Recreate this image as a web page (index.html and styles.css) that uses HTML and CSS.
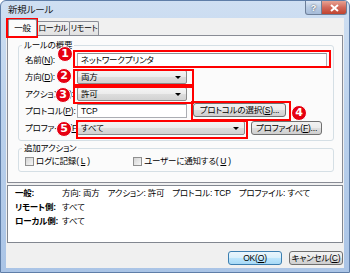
FILE: index.html
```html
<!DOCTYPE html>
<html lang="ja">
<head>
    <meta charset="UTF-8">
    <title>新規ルール</title>
    <link rel="stylesheet" href="styles.css">
</head>
<body>
    <div class="window">
        <div class="titlebar">
            <span class="title">新規ルール</span>
            <div class="caption-buttons">
                <span class="cap-btn help">?</span>
                <span class="cap-btn close">
                    <svg width="9" height="8" viewBox="0 0 9 8"><path d="M1 1 L8 7 M8 1 L1 7" stroke="#fff" stroke-width="2"/></svg>
                </span>
            </div>
        </div>

        <div class="frame">
            <div class="client">
                <div class="tabs">
                    <div class="tab active">一般</div>
                    <div class="tab">ローカル</div>
                    <div class="tab">リモート</div>
                </div>

                <div class="panel">
                    <div class="group rule-group">
                        <div class="group-title">ルールの概要</div>
                        <div class="form">
                            <label>名前(<u>N</u>):</label>
                            <div class="cell"><div class="input name-input">ネットワークプリンタ</div></div>

                            <label>方向(<u>D</u>):</label>
                            <div class="cell"><div class="combo short">両方</div></div>

                            <label>アクション(<u>A</u>):</label>
                            <div class="cell"><div class="combo short">許可</div></div>

                            <label>プロトコル(<u>P</u>):</label>
                            <div class="cell">
                                <div class="input short">TCP</div>
                                <div class="btn protocol-btn">プロトコルの選択(<u>S</u>)...</div>
                            </div>

                            <label>プロファイル(<u>F</u>):</label>
                            <div class="cell">
                                <div class="combo profile-combo">すべて</div>
                                <div class="btn profile-btn">プロファイル(<u>F</u>)...</div>
                            </div>
                        </div>
                    </div>

                    <div class="group action-group">
                        <div class="group-title">追加アクション</div>
                        <div class="checks">
                            <span class="check log"><span class="box"></span>ログに記録(<u>L</u>)</span>
                            <span class="check"><span class="box"></span>ユーザーに通知する(<u>U</u>)</span>
                        </div>
                    </div>
                </div>

                <div class="summary">
                    <div class="line"><b>一般:</b><span>方向: 両方<i></i>アクション: 許可<i></i>プロトコル: TCP<i></i>プロファイル: すべて</span></div>
                    <div class="line"><b>リモート側:</b><span>すべて</span></div>
                    <div class="line"><b>ローカル側:</b><span>すべて</span></div>
                </div>

                <div class="buttons">
                    <div class="btn default">OK(<u>O</u>)</div>
                    <div class="btn">キャンセル(<u>C</u>)</div>
                </div>
            </div>
        </div>

        <!-- annotation marks -->
        <div class="mark mark-tab"></div>
        <div class="mark mark-1"></div>
        <div class="mark mark-2"></div>
        <div class="mark mark-3"></div>
        <div class="mark mark-4"></div>
        <div class="mark mark-5"></div>
        <div class="num num-1">1</div>
        <div class="num num-2">2</div>
        <div class="num num-3">3</div>
        <div class="num num-4">4</div>
        <div class="num num-5">5</div>
    </div>
</body>
</html>
```

FILE: styles.css
```css
/* Windows 7 style dialog */
* {
    box-sizing: border-box;
}

body {
    margin: 0;
    font-family: 'Liberation Sans', 'Noto Sans CJK JP', sans-serif;
    font-size: 8.5px;
    letter-spacing: -0.2px;
    font-feature-settings: "palt";
    color: #000;
}

u {
    text-decoration: underline;
}

.window {
    position: relative;
    width: 350px;
    height: 273px;
    background: linear-gradient(#cfdff2, #bcd2ec 40%, #aac4e6);
    border: 1px solid #5f7ea8;
    border-radius: 6px 6px 0 0;
    display: flex;
    flex-direction: column;
    overflow: hidden;
}

.titlebar {
    height: 17px;
    display: flex;
    align-items: flex-start;
    padding-left: 7px;
}

.title {
    line-height: 17px;
    font-size: 9.5px;
    color: #1a1a1a;
}

.caption-buttons {
    margin-left: auto;
    margin-right: 2px;
    display: flex;
}

.cap-btn {
    height: 14px;
    display: flex;
    align-items: center;
    justify-content: center;
    border: 1px solid #6d7f99;
    border-top: none;
}

.help {
    width: 17px;
    border-radius: 0 0 0 3px;
    background: linear-gradient(#dbe6f4, #b8cbe3 50%, #a6bcd9);
    color: #fff;
    font-weight: bold;
    font-size: 9px;
    text-shadow: 0 0 2px #333;
}

.close {
    width: 25px;
    border-left: none;
    border-radius: 0 0 3px 0;
    background: linear-gradient(#e8a393, #d2685a 50%, #c0432f);
}

.frame {
    flex: 1;
    padding: 0 9px 4px 5px;
    display: flex;
}

.client {
    flex: 1;
    background: #f0f0f0;
    display: flex;
    flex-direction: column;
}

/* tabs */
.tabs {
    height: 17px;
    display: flex;
    align-items: flex-end;
    padding-left: 2px;
}

.tab {
    height: 14px;
    line-height: 13px;
    font-size: 8px;
    letter-spacing: -0.3px;
    text-align: center;
    white-space: nowrap;
    border: 1px solid #898c95;
    border-bottom: none;
    border-radius: 2px 2px 0 0;
    background: linear-gradient(#f2f2f2, #e1e1e1);
    margin-right: -1px;
}

.tab:nth-child(1) { width: 29px; }
.tab:nth-child(2) { width: 34px; }
.tab:nth-child(3) { width: 30px; }

.tab.active {
    height: 17px;
    line-height: 16px;
    font-size: 8.5px;
    background: #fbfbfb;
    position: relative;
    z-index: 1;
    margin-bottom: -1px;
}

.panel {
    height: 148px;
    margin: 0 1px;
    border: 1px solid #898c95;
    background: #fbfbfb;
}

.group {
    border: 1px solid #d5dfe5;
    border-radius: 3px;
    margin: 0 8px 0 10px;
    padding: 0 6px;
}

.group-title {
    width: fit-content;
    height: 11px;
    line-height: 11px;
    padding: 0 2px;
    margin-left: -3px;
    margin-top: -6px;
    background: #fbfbfb;
}

.rule-group {
    margin-top: 9px;
    padding-bottom: 5px;
}

.rule-group .group-title {
    margin-bottom: 2px;
}

.form {
    display: grid;
    grid-template-columns: 52px auto;
    row-gap: 3px;
}

.form label {
    height: 14px;
    line-height: 14px;
    white-space: nowrap;
}

.cell {
    display: flex;
    gap: 6px;
}

.input,
.combo,
.btn {
    height: 14px;
    line-height: 12px;
    padding-left: 3px;
    white-space: nowrap;
}

.input {
    background: #fff;
    border: 1px solid #abadb3;
    border-top-color: #8e9096;
}

.name-input {
    width: 250px;
}

.short {
    width: 110px;
}

.combo {
    position: relative;
    border: 1px solid #8a8a8a;
    border-radius: 2px;
    background: linear-gradient(#f4f4f4, #ebebeb 50%, #dddddd 51%, #d2d2d2);
}

.combo::after {
    content: "";
    position: absolute;
    right: 5px;
    top: 5px;
    border-left: 3px solid transparent;
    border-right: 3px solid transparent;
    border-top: 3px solid #000;
}

.profile-combo {
    width: 168px;
}

.btn {
    text-align: center;
    padding-left: 0;
    border: 1px solid #707070;
    border-radius: 3px;
    background: linear-gradient(#f2f2f2, #ebebeb 50%, #dddddd 51%, #cfcfcf);
}

.protocol-btn {
    width: 93px;
    margin-top: -1px;
}

.profile-btn {
    width: 71px;
}

.action-group {
    margin-top: 7px;
    padding-bottom: 4px;
}

.checks {
    display: flex;
    height: 12px;
    line-height: 12px;
    margin-top: 1px;
}

.check {
    display: flex;
    align-items: center;
    gap: 2px;
}

.check.log {
    width: 108px;
}

.check .box {
    width: 9px;
    height: 9px;
    border: 1px solid #8f8f8f;
    background: linear-gradient(135deg, #d4d4d4, #f6f6f6);
}

/* bottom summary */
.summary {
    height: 58px;
    margin: 2px 1px 0;
    background: #fff;
    border: 1px solid #828790;
    padding-left: 7px;
}

.summary .line {
    display: flex;
    height: 14px;
    line-height: 14px;
}

.summary b {
    width: 47px;
    flex: none;
}

.summary i {
    display: inline-block;
    width: 8px;
}

.buttons {
    display: flex;
    justify-content: flex-end;
    gap: 7px;
    margin-top: 8px;
    padding-right: 1px;
}

.buttons .btn {
    width: 54px;
}

.buttons .btn.default {
    border-color: #3c7fb1;
    background: linear-gradient(#eaf6fd, #d9f0fc 50%, #bee6fd 51%, #a7d9f5);
}

/* red annotation marks */
.mark {
    position: absolute;
    border: 2px solid #f00;
}

.mark-tab { left: 5px; top: 17px; width: 32px; height: 20px; }
.mark-1 { left: 72px; top: 49px; width: 258px; height: 18px; }
.mark-2 { left: 72px; top: 68px; width: 121px; height: 17px; }
.mark-3 { left: 72px; top: 85px; width: 121px; height: 18px; }
.mark-4 { left: 190px; top: 100px; width: 100px; height: 20px; }
.mark-5 { left: 75px; top: 119px; width: 172px; height: 19px; }

.num {
    position: absolute;
    width: 16px;
    height: 16px;
    border-radius: 50%;
    background: #e60012;
    border: 1px solid #fff;
    color: #fff;
    font-family: 'DejaVu Sans', sans-serif;
    font-weight: bold;
    font-size: 11px;
    line-height: 14px;
    letter-spacing: 0;
    text-align: center;
}

.num-1 { left: 56px; top: 45px; }
.num-2 { left: 55px; top: 67px; }
.num-3 { left: 54px; top: 86px; }
.num-4 { left: 290px; top: 104px; }
.num-5 { left: 55px; top: 120px; }
```
